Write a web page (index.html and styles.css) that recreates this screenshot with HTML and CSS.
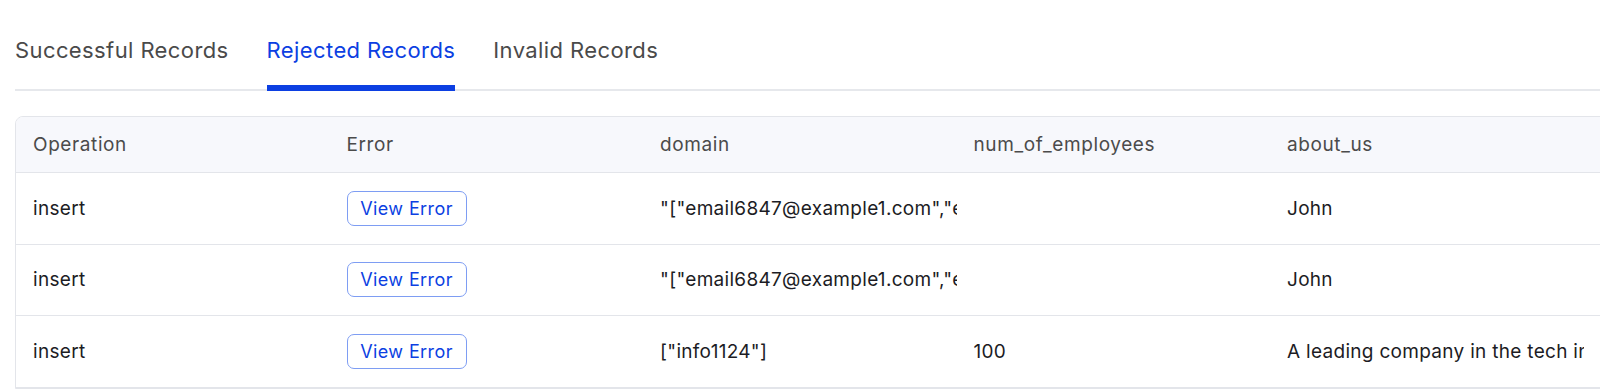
FILE: index.html
```html
<!DOCTYPE html>
<html lang="en">

<head>
  <meta charset="UTF-8">
  <meta name="viewport" content="width=device-width, initial-scale=1.0">
  <title>Import Results</title>
  <link rel="stylesheet" href="styles.css">
</head>

<body>
  <main class="results">
    <nav class="tabs">
      <a class="tab">Successful Records</a>
      <a class="tab active">Rejected Records</a>
      <a class="tab">Invalid Records</a>
    </nav>

    <div class="table-wrap">
      <table class="records">
        <thead>
          <tr>
            <th>Operation</th>
            <th>Error</th>
            <th>domain</th>
            <th>num_of_employees</th>
            <th>about_us</th>
            <th></th>
          </tr>
        </thead>
        <tbody>
          <tr>
            <td>insert</td>
            <td><button class="view-error">View Error</button></td>
            <td>"["email6847@example1.com","email6848@example1.com"]"</td>
            <td></td>
            <td>John</td>
            <td></td>
          </tr>
          <tr>
            <td>insert</td>
            <td><button class="view-error">View Error</button></td>
            <td>"["email6847@example1.com","email6848@example1.com"]"</td>
            <td></td>
            <td>John</td>
            <td></td>
          </tr>
          <tr>
            <td>insert</td>
            <td><button class="view-error">View Error</button></td>
            <td>["info1124"]</td>
            <td>100</td>
            <td>A leading company in the tech industry</td>
            <td></td>
          </tr>
        </tbody>
      </table>
    </div>
  </main>
</body>

</html>
```

FILE: styles.css
```css
body {
  margin: 0;
  padding: 0;
  font-family: Inter, "Open Sans", sans-serif;
  background-color: #ffffff;
  overflow: hidden;
}

.results {
  padding: 0 0 0 15px;
}

.tabs {
  display: flex;
  gap: 38px;
  padding-top: 35px;
  border-bottom: 2px solid #e6e8ec;
}

.tab {
  font-size: 22px;
  letter-spacing: 0.4px;
  line-height: 30px;
  color: #4a4a4a;
  padding-bottom: 20px;
  border-bottom: 6px solid transparent;
  margin-bottom: -2px;
  cursor: pointer;
}

.tab.active {
  color: #0c3fe2;
  border-bottom-color: #0c3fe2;
}

.table-wrap {
  margin-top: 25px;
}

.records {
  border-collapse: separate;
  border-spacing: 0;
  table-layout: fixed;
  width: 1883px;
  border: 1px solid #e3e5ea;
  border-radius: 8px 8px 0 0;
  overflow: hidden;
}

.records th,
.records td {
  width: 313.5px;
  padding: 0 0 0 17px;
  box-sizing: border-box;
  text-align: left;
  white-space: nowrap;
  overflow: hidden;
  font-size: 19px;
  letter-spacing: 0.3px;
  border-bottom: 1px solid #e3e5ea;
}

.records th {
  height: 56px;
  font-weight: 400;
  letter-spacing: 0.6px;
  color: #4b4b4b;
  background-color: #f7f8fc;
}

.records td {
  height: 71.5px;
  color: #1c1c24;
}

.view-error {
  font-family: inherit;
  font-size: 18px;
  letter-spacing: 0.4px;
  color: #0c3fe2;
  background: #ffffff;
  border: 1px solid #7e9df3;
  border-radius: 7px;
  width: 120px;
  height: 35px;
  padding: 0;
  cursor: pointer;
}
```
